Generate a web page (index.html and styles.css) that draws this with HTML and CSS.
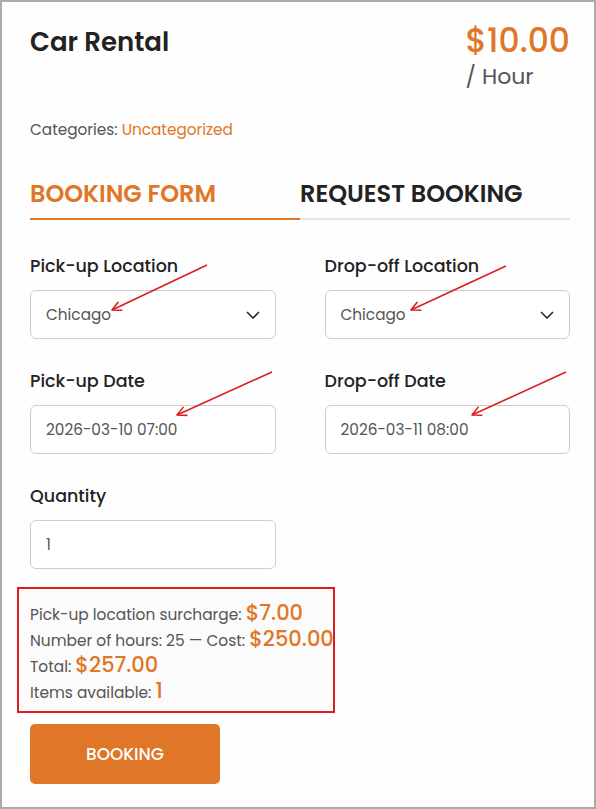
FILE: index.html
```html
<!DOCTYPE html>
<html lang="en">
<head>
<meta charset="utf-8">
<title>Car Rental</title>
<link rel="stylesheet" href="styles.css">
</head>
<body>
<div class="frame">
  <div class="product">
    <div class="head">
      <h1 class="title">Car Rental</h1>
      <div class="price">
        <div class="amount">$10.00</div>
        <div class="unit">/ Hour</div>
      </div>
    </div>
    <div class="cats">Categories: <a href="#">Uncategorized</a></div>
    <div class="tabs">
      <div class="tab active">BOOKING FORM</div>
      <div class="tab">REQUEST BOOKING</div>
    </div>
    <div class="form">
      <div class="field">
        <div class="label">Pick-up Location</div>
        <div class="control"><span>Chicago</span><svg class="chev" width="14" height="8" viewBox="0 0 14 8"><path d="M1 1 L7 7 L13 1" fill="none" stroke="#2a2a2a" stroke-width="1.6"/></svg></div>
      </div>
      <div class="field">
        <div class="label">Drop-off Location</div>
        <div class="control"><span>Chicago</span><svg class="chev" width="14" height="8" viewBox="0 0 14 8"><path d="M1 1 L7 7 L13 1" fill="none" stroke="#2a2a2a" stroke-width="1.6"/></svg></div>
      </div>
      <div class="field">
        <div class="label">Pick-up Date</div>
        <div class="control"><span>2026-03-10 07:00</span></div>
      </div>
      <div class="field">
        <div class="label">Drop-off Date</div>
        <div class="control"><span>2026-03-11 08:00</span></div>
      </div>
      <div class="field">
        <div class="label">Quantity</div>
        <div class="control"><span>1</span></div>
      </div>
    </div>
    <div class="summary">
      <div class="line">Pick-up location surcharge: <span class="amt">$7.00</span></div>
      <div class="line">Number of hours: 25 — Cost: <span class="amt">$250.00</span></div>
      <div class="line">Total: <span class="amt">$257.00</span></div>
      <div class="line">Items available: <span class="amt">1</span></div>
    </div>
    <button class="btn" type="button">BOOKING</button>
  </div>
  <svg class="annot" width="596" height="809" viewBox="0 0 596 809">
    <defs>
      <marker id="ah" viewBox="0 0 10 10" refX="9" refY="5" markerWidth="11" markerHeight="11" markerUnits="userSpaceOnUse" orient="auto">
        <path d="M1 1 L9 5 L1 9" fill="none" stroke="#d91f1f" stroke-width="1.4" stroke-linecap="round" stroke-linejoin="round"/>
      </marker>
    </defs>
    <g stroke="#d91f1f" stroke-width="1.6" fill="none" marker-end="url(#ah)">
      <line x1="207" y1="265" x2="112" y2="310"/>
      <line x1="506" y1="266" x2="411" y2="310"/>
      <line x1="272" y1="372" x2="177" y2="415"/>
      <line x1="566" y1="372" x2="472" y2="415"/>
    </g>
  </svg>
</div>
</body>
</html>
```

FILE: styles.css
```css
html, body {
  margin: 0;
  padding: 0;
  background: #fff;
}

body {
  font-family: Poppins, Inter, "Noto Sans", sans-serif;
  color: #555;
}

.frame {
  position: relative;
  box-sizing: border-box;
  width: 596px;
  height: 809px;
  border: 2px solid #ababab;
  background: #fefefe;
  overflow: hidden;
}

.product {
  padding: 20px 24px 0 28px;
}

.head {
  display: flex;
  justify-content: space-between;
  align-items: flex-start;
}

.title {
  margin: 5px 0 0;
  font-size: 26px;
  line-height: 30px;
  font-weight: 600;
  color: #222;
}

.amount {
  font-size: 33px;
  line-height: 38px;
  font-weight: 500;
  color: #e07626;
}

.unit {
  font-size: 22px;
  line-height: 33px;
  color: #555;
}

.cats {
  margin-top: 26px;
  font-size: 15.3px;
  line-height: 21px;
  color: #555;
}

.cats a {
  color: #e07626;
  text-decoration: none;
}

.tabs {
  display: flex;
  margin-top: 38px;
}

.tab {
  flex: 1;
  font-size: 24px;
  line-height: 31px;
  font-weight: 600;
  color: #222;
  padding-bottom: 9px;
  border-bottom: 2px solid #e6e6e6;
}

.tab.active {
  color: #e07626;
  border-bottom-color: #e07626;
}

.form {
  display: grid;
  grid-template-columns: 1fr 1fr;
  column-gap: 49px;
  row-gap: 30px;
  margin-top: 34px;
}

.label {
  font-size: 17.5px;
  line-height: 24px;
  font-weight: 500;
  color: #222;
  margin-bottom: 12px;
}

.control {
  box-sizing: border-box;
  height: 49px;
  border: 1px solid #cdcdcd;
  border-radius: 6px;
  padding: 0 15px 0 15px;
  display: flex;
  align-items: center;
  justify-content: space-between;
  font-size: 15.3px;
  color: #555;
  background: #fff;
}

.chev {
  display: block;
}

.summary {
  box-sizing: border-box;
  width: 318px;
  margin: 18px 0 0 -13px;
  border: 2px solid #e01b1b;
  padding: 13px 0 5px 11px;
  font-size: 15.4px;
  line-height: 26px;
  color: #555;
  background: #fbfbfb;
}

.line {
  white-space: nowrap;
}

.amt {
  font-size: 21px;
  line-height: 1;
  font-weight: 500;
  color: #e07626;
}

.btn {
  display: block;
  margin-top: 11px;
  width: 190px;
  height: 60px;
  border: 0;
  border-radius: 5px;
  background: #df7628;
  color: #fff;
  font-family: Poppins, Inter, "Noto Sans", sans-serif;
  font-size: 17px;
  font-weight: 500;
}

.annot {
  position: absolute;
  left: -2px;
  top: -2px;
  pointer-events: none;
}
```
